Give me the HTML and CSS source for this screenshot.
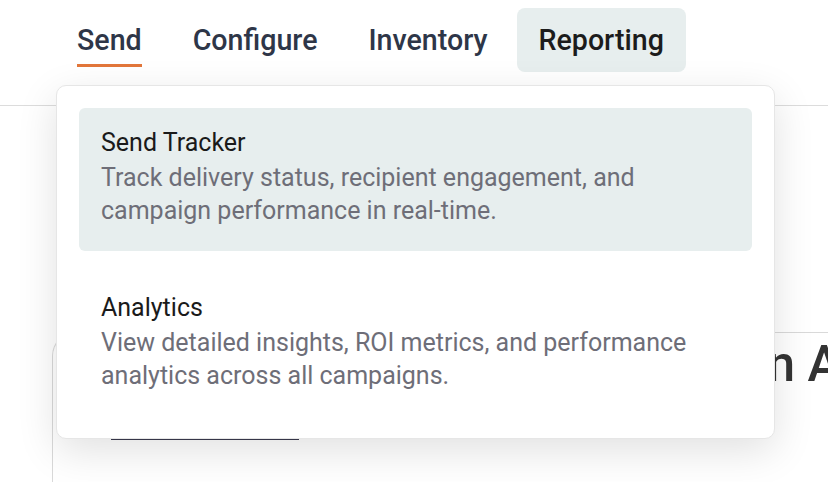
FILE: index.html
```html
<!DOCTYPE html>
<html>
<head>
    <meta charset="UTF-8">
    <meta name="viewport" content="width=device-width, initial-scale=1.0">
    <title>Reporting</title>
    <link rel="stylesheet" href="styles.css">
</head>
<body>
    <div class="header">
        <nav class="nav">
            <a class="nav-item active">Send</a>
            <a class="nav-item">Configure</a>
            <a class="nav-item">Inventory</a>
            <a class="nav-item open">Reporting</a>
        </nav>

        <div class="dropdown">
            <a class="menu-item hover">
                <div class="menu-title">Send Tracker</div>
                <div class="menu-desc">Track delivery status, recipient engagement, and campaign performance in real-time.</div>
            </a>
            <a class="menu-item">
                <div class="menu-title">Analytics</div>
                <div class="menu-desc">View detailed insights, ROI metrics, and performance analytics across all campaigns.</div>
            </a>
        </div>
    </div>

    <div class="main">
        <div class="card">
            <h1 class="card-title">Welcome to Campaign Analytics</h1>
            <div class="tabs">
                <span class="tab active"></span>
            </div>
        </div>
    </div>
</body>
</html>
```

FILE: styles.css
```css
:root {
    --accent: #e2763a;
    --nav-text: #2e3648;
    --hover-bg: #e7eeee;
    --muted: #6e6e78;
}

body {
    margin: 0;
    font-family: Roboto, "Liberation Sans", Arial, sans-serif;
    background: #fff;
    overflow: hidden;
}

.header {
    position: relative;
    height: 106px;
    border-bottom: 1px solid #dcdcdc;
    box-sizing: border-box;
}

.nav {
    display: flex;
    gap: 7px;
    padding: 8px 0 0 55px;
}

.nav-item {
    position: relative;
    display: flex;
    align-items: center;
    height: 64px;
    padding: 0 22px;
    border-radius: 8px;
    font-size: 28.6px;
    font-weight: 500;
    color: var(--nav-text);
    cursor: pointer;
}

.nav-item.active::after {
    content: "";
    position: absolute;
    left: 22px;
    right: 22px;
    bottom: 5px;
    height: 3px;
    background: var(--accent);
}

.nav-item.open {
    background: var(--hover-bg);
    color: #1c1c1c;
}

.dropdown {
    position: absolute;
    top: 85px;
    left: 56px;
    width: 719px;
    box-sizing: border-box;
    padding: 22px;
    display: flex;
    flex-direction: column;
    gap: 22px;
    background: #fff;
    border: 1px solid #e6e6e6;
    border-radius: 10px;
    box-shadow: 0 12px 40px rgba(0,0,0,0.12);
    z-index: 10;
}

.menu-item {
    display: block;
    padding: 18px 22px 24px;
    border-radius: 6px;
    cursor: pointer;
}

.menu-item.hover {
    background: var(--hover-bg);
}

.menu-title {
    font-size: 25px;
    line-height: 34px;
    color: #1a1a1a;
}

.menu-desc {
    margin-top: 1px;
    font-size: 25px;
    line-height: 33px;
    color: var(--muted);
}

.main {
    padding: 226px 0 0 52px;
}

.card {
    height: 200px;
    border: 1px solid #d9d9d9;
    border-right: none;
    border-top-left-radius: 24px;
    padding: 3px 0 0 238px;
}

.card-title {
    margin: 0;
    white-space: nowrap;
    font-size: 50px;
    font-weight: 500;
    color: #333;
    line-height: 56px;
}

.tabs {
    margin-top: 46px;
}

.tab {
    display: block;
    width: 188px;
    height: 2px;
    margin-left: -180px;
    background: #3b3b4f;
}
```
